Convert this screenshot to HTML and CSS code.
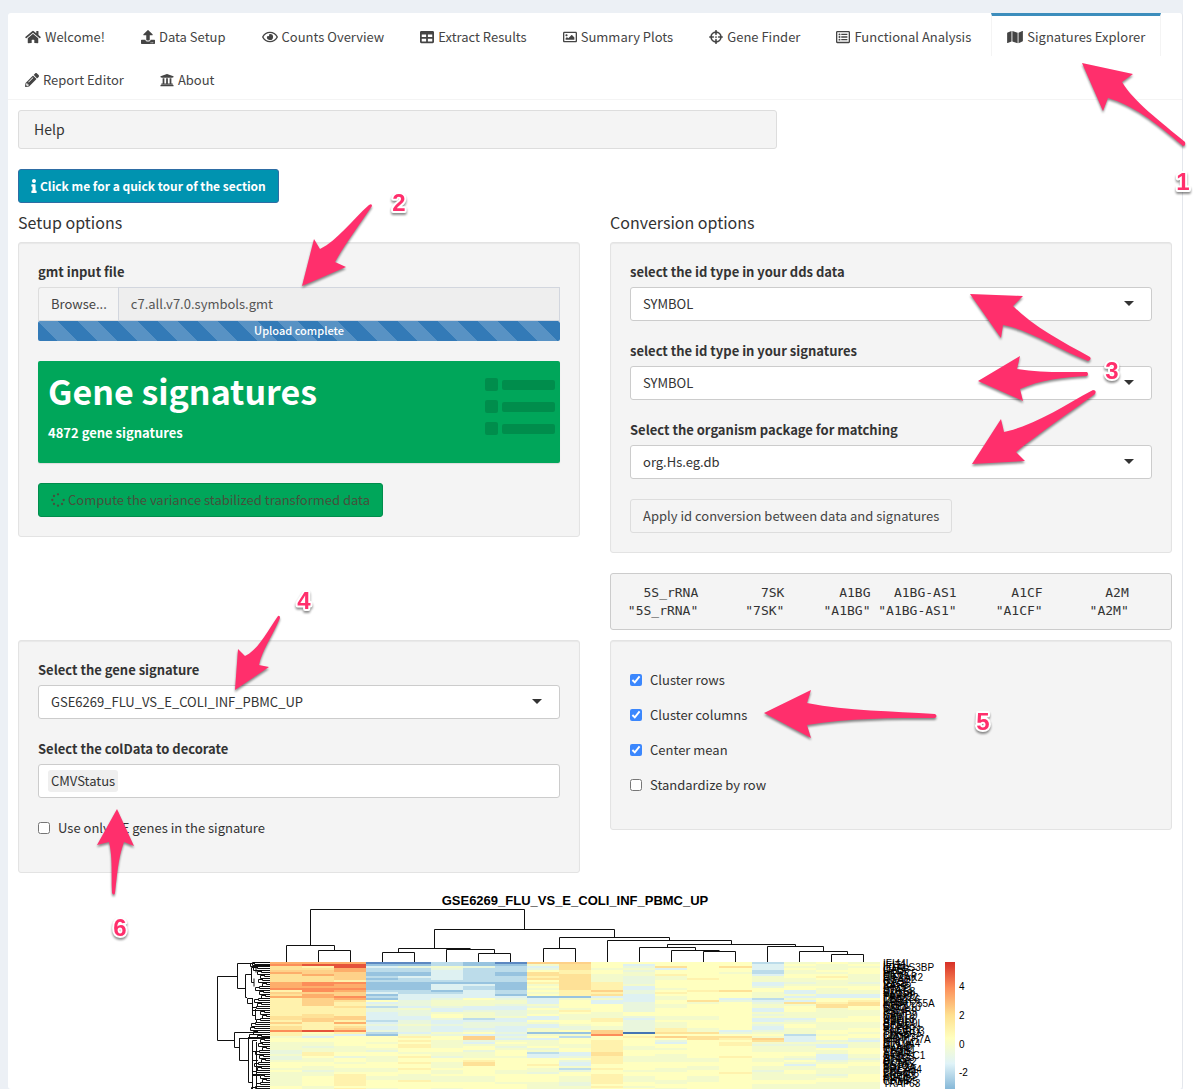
FILE: index.html
```html
<!DOCTYPE html>
<html lang="en">
<head>
<meta charset="utf-8">
<title>Signatures Explorer</title>
<link rel="stylesheet" href="styles.css">
</head>
<body>
<div class="page">
  <div class="tabbox">
    <nav class="tabs">
      <a class="tab" href="#welcome"><svg class="icon wide" viewBox="0 0 576 512"><path d="M280.37 148.26L96 300.11V464a16 16 0 0 0 16 16l112.06-.29a16 16 0 0 0 15.92-16V368a16 16 0 0 1 16-16h64a16 16 0 0 1 16 16v95.64a16 16 0 0 0 16 16.05L464 480a16 16 0 0 0 16-16V300L295.67 148.26a12.19 12.19 0 0 0-15.3 0zM571.6 251.47L488 182.56V44.05a12 12 0 0 0-12-12h-56a12 12 0 0 0-12 12v72.61L318.47 43a48 48 0 0 0-61 0L4.34 251.47a12 12 0 0 0-1.6 16.9l25.5 31A12 12 0 0 0 45.15 301l235.22-193.74a12.19 12.19 0 0 1 15.3 0L530.9 301a12 12 0 0 0 16.9-1.6l25.5-31a12 12 0 0 0-1.7-16.93z"/></svg>Welcome!</a>
      <a class="tab" href="#setup"><svg class="icon" viewBox="0 0 512 512"><path d="M296 384h-80c-13.3 0-24-10.7-24-24V192h-87.7c-17.8 0-26.7-21.5-14.1-34.1L242.3 5.7c7.5-7.5 19.8-7.5 27.3 0l152.2 152.2c12.6 12.6 3.7 34.1-14.1 34.1H320v168c0 13.3-10.7 24-24 24zm216-8v112c0 13.3-10.7 24-24 24H24c-13.3 0-24-10.7-24-24V376c0-13.3 10.7-24 24-24h136v8c0 30.9 25.1 56 56 56h80c30.9 0 56-25.1 56-56v-8h136c13.3 0 24 10.7 24 24zm-124 88c0-11-9-20-20-20s-20 9-20 20 9 20 20 20 20-9 20-20zm64 0c0-11-9-20-20-20s-20 9-20 20 9 20 20 20 20-9 20-20z"/></svg>Data Setup</a>
      <a class="tab" href="#counts"><svg class="icon wide" viewBox="0 0 576 512"><path d="M288 144a110.94 110.94 0 0 0-31.24 5 55.4 55.4 0 0 1 7.24 27 56 56 0 0 1-56 56 55.4 55.4 0 0 1-27-7.24A111.71 111.71 0 1 0 288 144zm284.52 97.4C518.29 135.59 410.93 64 288 64S57.68 135.64 3.48 241.41a32.35 32.35 0 0 0 0 29.19C57.71 376.41 165.07 448 288 448s230.32-71.64 284.52-177.41a32.35 32.35 0 0 0 0-29.19zM288 400c-98.65 0-189.09-55-237.93-144C98.91 167 189.34 112 288 112s189.09 55 237.93 144C477.1 345 386.66 400 288 400z"/></svg>Counts Overview</a>
      <a class="tab" href="#results"><svg class="icon" viewBox="0 0 512 512"><path d="M464 32H48C21.49 32 0 53.49 0 80v352c0 26.51 21.49 48 48 48h416c26.51 0 48-21.49 48-48V80c0-26.51-21.49-48-48-48zM224 416H64v-96h160v96zm0-160H64v-96h160v96zm224 160H288v-96h160v96zm0-160H288v-96h160v96z"/></svg>Extract Results</a>
      <a class="tab" href="#plots"><svg class="icon" viewBox="0 0 512 512"><path d="M464 64H48C21.49 64 0 85.49 0 112v288c0 26.51 21.49 48 48 48h416c26.51 0 48-21.49 48-48V112c0-26.51-21.49-48-48-48zm-6 336H54a6 6 0 0 1-6-6V118a6 6 0 0 1 6-6h404a6 6 0 0 1 6 6v276a6 6 0 0 1-6 6zM128 152c-22.091 0-40 17.909-40 40s17.909 40 40 40 40-17.909 40-40-17.909-40-40-40zM96 352h320v-80l-87.515-87.515c-4.686-4.686-12.284-4.686-16.971 0L192 304l-39.515-39.515c-4.686-4.686-12.284-4.686-16.971 0L96 304v48z"/></svg>Summary Plots</a>
      <a class="tab" href="#finder"><svg class="icon" viewBox="0 0 512 512"><g fill="none" stroke="currentColor" stroke-width="60"><circle cx="256" cy="256" r="180"/><path stroke-linecap="round" d="M256 28v130M256 354v130M28 256h130M354 256h130"/></g><circle cx="256" cy="256" r="32"/></svg>Gene Finder</a>
      <a class="tab" href="#functional"><svg class="icon" viewBox="0 0 512 512"><path fill-rule="evenodd" d="M464 32H48C21.49 32 0 53.49 0 80v352c0 26.51 21.49 48 48 48h416c26.51 0 48-21.49 48-48V80c0-26.51-21.49-48-48-48zm-6 400H54a6 6 0 0 1-6-6V86a6 6 0 0 1 6-6h404a6 6 0 0 1 6 6v340a6 6 0 0 1-6 6z"/><path d="M192 136h224v48H192zM192 232h224v48H192zM192 328h224v48H192z"/><circle cx="128" cy="160" r="36"/><circle cx="128" cy="256" r="36"/><circle cx="128" cy="352" r="36"/></svg>Functional Analysis</a>
      <a class="tab active" href="#signatures" aria-current="page"><svg class="icon wide" viewBox="0 0 576 512"><path d="M0 117.66v346.32c0 11.32 11.43 19.06 21.94 14.86L160 416V32L20.12 87.95A32.006 32.006 0 0 0 0 117.66zM192 416l192 64V96L192 32v384zM554.06 33.16L416 96v384l139.88-55.95A31.996 31.996 0 0 0 576 394.34V48.02c0-11.32-11.43-19.06-21.94-14.86z"/></svg>Signatures Explorer</a>
      <a class="tab" href="#report"><svg class="icon" viewBox="0 0 512 512"><path d="M497.9 142.1l-46.1 46.1c-4.7 4.7-12.3 4.7-17 0l-111-111c-4.7-4.7-4.7-12.3 0-17l46.1-46.1c18.7-18.7 49.1-18.7 67.9 0l60.1 60.1c18.8 18.7 18.8 49.1 0 67.9zM284.2 99.8L21.6 362.4.4 483.9c-2.9 16.4 11.4 30.6 27.8 27.8l121.5-21.3 262.6-262.6c4.7-4.7 4.7-12.3 0-17l-111-111c-4.8-4.7-12.4-4.7-17.1 0zM124.1 339.9c-5.5-5.5-5.5-14.3 0-19.8l154-154c5.5-5.5 14.3-5.5 19.8 0s5.5 14.3 0 19.8l-154 154c-5.5 5.5-14.3 5.5-19.8 0zM88 424h48v36.3l-64.5 11.3-31.1-31.1L51.7 376H88v48z"/></svg>Report Editor</a>
      <a class="tab" href="#about"><svg class="icon" viewBox="0 0 512 512"><path d="M496 128v16a8 8 0 0 1-8 8h-24v12c0 6.627-5.373 12-12 12H60c-6.627 0-12-5.373-12-12v-12H24a8 8 0 0 1-8-8v-16a8 8 0 0 1 4.941-7.392l232-88a7.996 7.996 0 0 1 6.118 0l232 88A8 8 0 0 1 496 128zm-24 304H40c-13.255 0-24 10.745-24 24v16a8 8 0 0 0 8 8h464a8 8 0 0 0 8-8v-16c0-13.255-10.745-24-24-24zM96 192v192H60c-6.627 0-12 5.373-12 12v20h416v-20c0-6.627-5.373-12-12-12h-36V192h-64v192h-64V192h-64v192h-64V192H96z"/></svg>About</a>
    </nav>

    <main class="content">
      <div class="help">Help</div>
      <button class="btn tour" type="button"><svg class="icon-info" viewBox="0 0 192 512"><path d="M20 424.229h20V279.771H20c-11.046 0-20-8.954-20-20V212c0-11.046 8.954-20 20-20h112c11.046 0 20 8.954 20 20v212.229h20c11.046 0 20 8.954 20 20V492c0 11.046-8.954 20-20 20H20c-11.046 0-20-8.954-20-20v-47.771c0-11.046 8.954-20 20-20zM96 0C56.235 0 24 32.235 24 72s32.235 72 72 72 72-32.235 72-72S135.764 0 96 0z"/></svg>Click me for a quick tour of the section</button>

      <div class="columns">
        <section>
          <h2>Setup options</h2>
          <div class="well">
            <div class="field">
              <label for="gmt">gmt input file</label>
              <div class="file">
                <label class="browse">Browse...<input class="hidden-file" type="file" id="gmt"></label>
                <input class="filename" type="text" value="c7.all.v7.0.symbols.gmt" aria-label="Chosen file" readonly>
              </div>
              <div class="progress">Upload complete</div>
            </div>
            <div class="valuebox">
              <div>
                <h3>Gene signatures</h3>
                <p>4872 gene signatures</p>
              </div>
              <svg class="list-icon" viewBox="0 0 70 58"><rect width="13" height="13" rx="2"/><rect y="22" width="13" height="13" rx="2"/><rect y="44" width="13" height="13" rx="2"/><rect x="17" y="2" width="53" height="10" rx="2"/><rect x="17" y="24" width="53" height="10" rx="2"/><rect x="17" y="46" width="53" height="10" rx="2"/></svg>
            </div>
            <button class="btn compute" type="button"><svg class="icon" viewBox="0 0 512 512"><circle cx="256" cy="48" r="42"/><circle cx="256" cy="464" r="42"/><circle cx="48" cy="256" r="42"/><circle cx="464" cy="256" r="42"/><circle cx="109" cy="109" r="42"/><circle cx="109" cy="403" r="42"/><circle cx="403" cy="403" r="42"/></svg>Compute the variance stabilized transformed data</button>
          </div>
        </section>
        <section>
          <h2>Conversion options</h2>
          <div class="well">
            <div class="field">
              <label for="idtype">select the id type in your dds data</label>
              <div class="select"><select id="idtype"><option>SYMBOL</option></select></div>
            </div>
            <div class="field">
              <label for="sigtype">select the id type in your signatures</label>
              <div class="select"><select id="sigtype"><option>SYMBOL</option></select></div>
            </div>
            <div class="field">
              <label for="org">Select the organism package for matching</label>
              <div class="select"><select id="org"><option>org.Hs.eg.db</option></select></div>
            </div>
            <button class="btn" type="button">Apply id conversion between data and signatures</button>
          </div>
          <pre>   5S_rRNA        7SK       A1BG   A1BG-AS1       A1CF        A2M 
 "5S_rRNA"      "7SK"     "A1BG" "A1BG-AS1"     "A1CF"      "A2M" </pre>
        </section>
      </div>

      <div class="columns lower">
        <section class="well">
          <div class="field">
            <label for="signature">Select the gene signature</label>
            <div class="select"><select id="signature"><option>GSE6269_FLU_VS_E_COLI_INF_PBMC_UP</option></select></div>
          </div>
          <div class="field">
            <label for="coldata">Select the colData to decorate</label>
            <div class="tokens"><span class="token">CMVStatus</span><input type="text" id="coldata"></div>
          </div>
          <label class="check"><input type="checkbox">Use only DE genes in the signature</label>
        </section>
        <section class="well checks">
          <label class="check"><input type="checkbox" checked>Cluster rows</label>
          <label class="check"><input type="checkbox" checked>Cluster columns</label>
          <label class="check"><input type="checkbox" checked>Center mean</label>
          <label class="check"><input type="checkbox">Standardize by row</label>
        </section>
      </div>

      <svg class="heatmap" viewBox="18 883 1154 206">
        <defs>
          <linearGradient id="scale" x1="0" y1="0" x2="0" y2="1">
            <stop offset="0" stop-color="#d73027"/><stop offset=".2" stop-color="#fc8d59"/><stop offset=".42" stop-color="#fee090"/><stop offset=".6" stop-color="#ffffbf"/><stop offset=".8" stop-color="#e0f3f8"/><stop offset="1" stop-color="#86b8d8"/>
          </linearGradient>
        </defs>
        <text class="plot-title" x="575" y="905" text-anchor="middle">GSE6269_FLU_VS_E_COLI_INF_PBMC_UP</text>
        <g id="cells" shape-rendering="crispEdges"></g>
        <path class="tree" d="M310.5 945V909.5H524.5V929M286.5 962V945.5H334.500V950M318.500 962V950.500H350.500V962M434.500 948V929.500H614.500V937M398.500 952V948.500H470.500M382.500 962V952.500H414.500V962M446.500 962V949.500H494.500V953M478.500 962V953.500H510.500V962M559.500 948V937.500H669.500V940M543.500 962V948.500H575.500V962M607.500 962V940.500H731.500V944M667.500 947V944.500H795.500V946M639.500 962V947.500H695.500V950M671.500 962V950.500H719.500M703.500 962V951.500H735.500V962M767.500 962V946.500H823.500V951M799.500 962V951.500H847.500V954M831.500 962V954.500H863.500V962"/>
        <path class="tree" d="M237 976.500H217.500V1040.500H234M252 963.500H237.500V988.500H245M270 962.500H252.500V965.500H270M251 974.500H245.500V997.500H247M256 967.500H251.500V982.500H254M256 967.500V972.500M254 978.500V986.500M252 998.500H247.500V1003.500H252M252.500 998V1015.500H255M255.500 1009V1020M256 1032.500H234.500V1047.500H239M270 1032.500H255M270 1034.500H249.500V1038M239.500 1038V1060.500H248M270 1038.500H239M248.500 1038V1082.500H252M270 1037.500H248M257 1040.500H252.500V1089M252 1051.500H256M256.500 1042V1089M252 1060.500H258M252 1075.500H260"/>
        <path class="tree" id="leaves" d=""/>
        <g class="genes" id="genes"></g>
        <rect x="945" y="962" width="10" height="127" fill="url(#scale)"/>
        <g class="ticks"><text x="959" y="990">4</text><text x="959" y="1019">2</text><text x="959" y="1048">0</text><text x="959" y="1076">-2</text></g>
      </svg>
    </main>
  </div>
</div>

<svg class="notes" viewBox="0 0 1200 1089">
  <g class="arrows">
    <path d="M1082 63L1133 74L1122 82C1134 102 1160 121 1185 142Q1186 146 1183 146C1154 121 1132 105 1108 98L1103 111Z"/>
    <path d="M302 286L314 239L320 249C338 240 352 220 369 205Q372 203 372 206C360 224 345 244 335 262L346 267Z"/>
    <path d="M970 294L1023 296L1013 306C1034 327 1063 342 1090 357Q1092 360 1088 361C1060 350 1030 330 1003 325L1001 338Z"/>
    <path d="M978 381L1020 356L1017 369C1040 373 1064 372 1087 372Q1089 374 1087 376C1064 377 1040 380 1020 389L1023 401Z"/>
    <path d="M972 464L1001 419L1004 432C1036 425 1063 406 1093 390Q1097 390 1095 394C1070 412 1038 434 1016 452L1025 461Z"/>
    <path d="M235 690L238 649L245 656C258 650 267 632 278 616Q280 615 280 618C273 635 262 650 259 665L269 667Z"/>
    <path d="M764 713L811 690L807 703C848 711 892 711 935 714Q938 716 935 718C892 718 848 718 807 725L811 738Z"/>
    <path d="M117 809L134 846L124 842C118 858 117 877 115 893Q114 896 112 893C111 877 113 858 109 842L97 845Z"/>
  </g>
  <g class="numbers"><text x="1183" y="190">1</text><text x="399" y="211">2</text><text x="1112" y="379">3</text><text x="304" y="609">4</text><text x="983" y="730">5</text><text x="120" y="936">6</text></g>
</svg>
<script src="heatmap.js"></script>
</body>
</html>
```
FILE: styles.css
```css
* { box-sizing: border-box; }
body {
  margin: 0;
  position: relative;
  background: #fff;
  color: #333;
  font: 13px/20px "Noto Sans CJK JP", "Open Sans", sans-serif;
}
input, select, button { font: inherit; color: inherit; }
.page { margin-right: 17px; padding: 13px 0 0 8px; background: #ecf0f5; }
.tabbox { background: #fff; border-radius: 3px; border-right: 1px solid #e4e7ec; }

.tabs { display: flex; flex-wrap: wrap; column-gap: 4px; padding-left: 1px; border-bottom: 1px solid #f4f4f4; }
.tab {
  display: flex; align-items: center; gap: 4px;
  height: 43px; padding: 2px 15px 0;
  border: 1px solid transparent; border-width: 3px 1px 0;
  color: #444; text-decoration: none;
}
.tab.active { border-color: #3c8dbc #f4f4f4 transparent; }
.icon { width: 14px; height: 14px; flex: none; fill: currentColor; }
.icon.wide { width: 16px; }
.icon-info { width: 6px; height: 14px; fill: currentColor; }

.content { padding: 10px 10px 0; }
.help {
  width: 759px; max-width: 100%; padding: 9px 15px;
  background: #f4f4f4; border: 1px solid #ddd; border-radius: 3px;
  font-size: 14px; line-height: 19px;
}
.btn {
  display: inline-flex; align-items: center; gap: 3px;
  height: 34px; padding: 0 12px;
  background: #f4f4f4; border: 1px solid #ddd; border-radius: 3px;
  color: #444;
}
.tour { margin-top: 20px; background: #0093b0; border-color: #2e6da4; color: #fff; font-size: 12px; font-weight: 700; }
.compute { background: #00a65a; border-color: #008d4c; color: #46503c; }

.columns { display: grid; grid-template-columns: 1fr 1fr; column-gap: 30px; align-items: start; }
h2 { margin: 9px 0 10px; font-size: 16px; line-height: 20px; font-weight: 400; }
.well {
  padding: 19px; background: #f4f4f4;
  border: 1px solid #e3e3e3; border-radius: 3px;
  box-shadow: inset 0 1px 1px rgba(0, 0, 0, .05);
}
.field { margin-bottom: 20px; }
.field > label { display: block; margin-bottom: 5px; font-weight: 700; }
.file { display: flex; height: 34px; }
.browse { padding: 6px 11px 6px 12px; border: 1px solid #ddd; border-right: 0; border-radius: 3px 0 0 0; color: #444; }
.hidden-file { position: absolute; width: 1px; height: 1px; opacity: 0; }
.filename { flex: 1; min-width: 0; padding: 0 12px; border: 1px solid #d2d6de; border-radius: 0; background: #eee; color: #555; }
.progress {
  height: 20px; border-radius: 2px; color: #fff; text-align: center; font-size: 11px; line-height: 19px; font-weight: 500;
  background: #337ab7 linear-gradient(45deg, rgba(255,255,255,.18) 25%, transparent 25%, transparent 50%, rgba(255,255,255,.18) 50%, rgba(255,255,255,.18) 75%, transparent 75%) 0 0 / 40px 40px;
}
.valuebox {
  display: flex; justify-content: space-between;
  height: 102px; margin-bottom: 20px; padding: 10px 5px 10px 10px;
  background: #00a65a; border-radius: 2px; color: #fff;
  box-shadow: 0 1px 1px rgba(0, 0, 0, .1);
}
.valuebox h3 { margin: 0 0 13px; font-size: 34px; line-height: 39px; font-weight: 700; }
.valuebox p { margin: 0; font-weight: 700; }
.list-icon { width: 70px; height: 58px; margin-top: 7px; fill: rgba(0, 0, 0, .15); }

.select { position: relative; }
.select select {
  appearance: none; display: block; width: 100%; height: 34px; padding: 0 30px 0 12px;
  background: #fff; border: 1px solid #ccc; border-radius: 3px;
}
.select::after {
  content: ""; position: absolute; right: 18px; top: 14px; pointer-events: none;
  border: 5px solid transparent; border-top-color: #333; border-bottom: 0;
}
.tokens { display: flex; align-items: center; height: 34px; padding: 0 9px; background: #fff; border: 1px solid #ccc; border-radius: 3px; }
.token { padding: 1px 3px; background: #efefef; border-radius: 3px; }
.tokens input { flex: 1; min-width: 0; border: 0; background: none; }
pre {
  margin: 20px 0 0; padding: 10px 9px 9px; overflow: hidden;
  background: #f4f4f4; border: 1px solid #ccc; border-radius: 3px;
  font: 13px/18px "DejaVu Sans Mono", monospace;
}
.lower { margin-top: 10px; }
.check { display: flex; align-items: center; gap: 8px; margin-bottom: 15px; }
.check input { width: 12px; height: 12px; margin: 0; accent-color: #3b87fd; }
.checks { padding-top: 29px; }

.heatmap { display: block; width: 100%; margin-top: 10px; }
.heatmap text { font-family: "Liberation Sans", Arial, sans-serif; fill: #000; }
.heatmap .plot-title { font-size: 13px; font-weight: 700; }
.heatmap .ticks text { font-size: 10px; }
.heatmap .genes text { font-size: 10px; }
.tree { fill: none; stroke: #111; stroke-width: 1; }

.notes { position: absolute; left: 0; top: 0; width: 1200px; height: 1089px; pointer-events: none; }
.arrows, .numbers { fill: #ff2f6c; filter: drop-shadow(0 2px 1px rgba(0, 0, 0, .45)); }
.numbers text {
  font: 700 24px "Liberation Sans", Arial, sans-serif; text-anchor: middle;
  stroke: #fff; stroke-width: 4; stroke-linejoin: round; paint-order: stroke;
}
```
FILE: heatmap.js
```js
// One string per sample, one letter per gene row (2 units tall), warm to cool.
const palette = {
  R: "#e5533b", O: "#fc8d59", o: "#fdae6b", t: "#fed189", s: "#fee197", y: "#fff2ad", Y: "#ffffbf",
  g: "#f3facb", l: "#e9f6dd", c: "#def1f2", b: "#bcdcea", B: "#97c3df", D: "#5c88c1", N: "#4575b4"
};
const columns = [
  "oOsstossssoooOytsoyyyyyyyyyssytyssOyygYYggggllgllgYYYgYgggggggYY",
  "oRysttosssOOoOOtoottttyyyyssttyyyyRYgcYYgglggyyYggYYgglggYYYYYgg",
  "oRRoottttyOooOottOosyysyyyyttyoystOycYYYYYgggYYlYYgYYggYyyyyyyYy",
  "DBcbbBBbBbBBBBbcBbBYclbllccccbclcclbBYYYgYYglYYgggYYYggYYggYYYYg",
  "DBlbbBBcbbBBBBbbccclllcglllccllglllcgyYyYyyYYgYyYYyYYyYYgggyYYYY",
  "bbglcccccbBcccBbcclggglccgYYlcclcccglYYggggYYgglYYgggYggYgggYYYg",
  "BBlbbbbbbbBcbbccccYgggcclgggbclllclYcttlcgYYlgggYyssYYYYYgggYYYY",
  "DBbbbBBbbbBBBBbbBclgglcclllgccllccclclcgYglgYYYgYYYYYYggYYYYgYYY",
  "tgclYssysYygYgYgYBcccglYggYccYgccggBgYcgggYlgbccYYYyYgglYYYYgggg",
  "tsssyyssssssssyyyBgYYYYgyYgggYYgllYBgbYYYggYYcclYlccgblYYgggllgg",
  "YYYgYYggggyyyytyscgccYYYYgggyyYYggttOYYyyyyyyssyyyyYYyYYyyyyyYyY",
  "YclglggllllgccllcccclllllYYlcllllllNYyYYYYggYYYgggYYYYgYYgggYYgY",
  "YYscYYyggYYYYgYyYggYYggYYYYggYgggyysYtYlcYYgYYggggYYYggYYYYggYYg",
  "YYYYYYYYyYYYYYyYYYYsgYYYYYYggYYYYggsYssYYYYYYYYYggYYggYYYgggYYYY",
  "YYsYYgYYYYYYYYsYYYclYYYYYYYYYYYYYYclYsyYyyYYYYYyYYYYYYYyYYYYYYYY",
  "bcccbbcgggcclYYgggbclggccglgccglcclgYgtsglgggYYYggYYgglggggYYggg",
  "gYgYggYYgglgYYccgcgcsgYYYgggclgYYgggbcccglgggYYglYgcggYYgggYYggg",
  "YgggYgYyYgggYgggccYYyssgggggYYggggYYgYYlgccYggccclgYYggglgYYgggg",
  "gYgYYYgggglgYYggccYyssYYgggYYYgggYYgYYlcgggYYYgglgYYggggYYYYgggg"
];
const genes = ["IFI44L", "IFIT1", "LGALS3BP", "OAS3", "IFIT3", "HERC5", "MX1", "EIF2AK2", "RSAD2", "OAS1", "ISG15", "XAF1", "IFI35", "STAT1", "DDX58", "SP110", "PARP9", "TRIM22", "UBE2L6", "LAP3", "KIAA0255A", "GBP1", "CXCL10", "TAP1", "PSMB9", "IRF7", "SAMD9", "NMI", "USP18", "APOL1", "SAMD9L", "CCR2", "RTP4", "PLSCR1", "SNORD3", "TNFSF1", "CD38", "LAMP3", "HIST1H7A", "IFI6", "SLC2A4", "GZMB", "HLA-D", "CASP1", "TYMS", "ADAR", "SIGLEC1", "NT5C3", "ATF5", "CCNB2", "MCM6", "BST2", "TOP2A", "BRCA24", "CDC20", "ZNF658", "FCER1", "KIF11", "RRM2", "CHMP5", "TRAF63"];

const NS = "http://www.w3.org/2000/svg";
const top0 = 962, left0 = 270, colWidth = 610 / 19;

function add(parent, name, attrs, text) {
  const node = document.createElementNS(NS, name);
  for (const key in attrs) node.setAttribute(key, attrs[key]);
  if (text) node.textContent = text;
  parent.appendChild(node);
}

const cells = document.getElementById("cells");
columns.forEach((rows, c) => {
  const x = Math.round(left0 + c * colWidth);
  const width = Math.round(left0 + (c + 1) * colWidth) - x;
  for (let r = 0; r < rows.length; r++) {
    add(cells, "rect", { x, y: top0 + r * 2, width, height: 2, fill: palette[rows[r]] });
  }
});

const labels = document.getElementById("genes");
genes.forEach((name, r) => add(labels, "text", { x: 883, y: 967 + r * 2 }, name));

// Leaf branches of the row tree: each pair of rows joins at its own depth.
const depths = [254, 257, 261, 264, 262, 266, 259, 263, 265, 258, 261, 256, 264, 266, 260, 255];
let leaves = "";
for (let r = 0; r < 63; r += 2) {
  const x = depths[(r / 2) % depths.length] + 0.5;
  const y = top0 + r * 2 + 0.5;
  leaves += `M270 ${y}H${x}V${y + 2}H270M${x} ${y + 1}H${x - 4}V${y + 4}H270`;
}
document.getElementById("leaves").setAttribute("d", leaves);
```
